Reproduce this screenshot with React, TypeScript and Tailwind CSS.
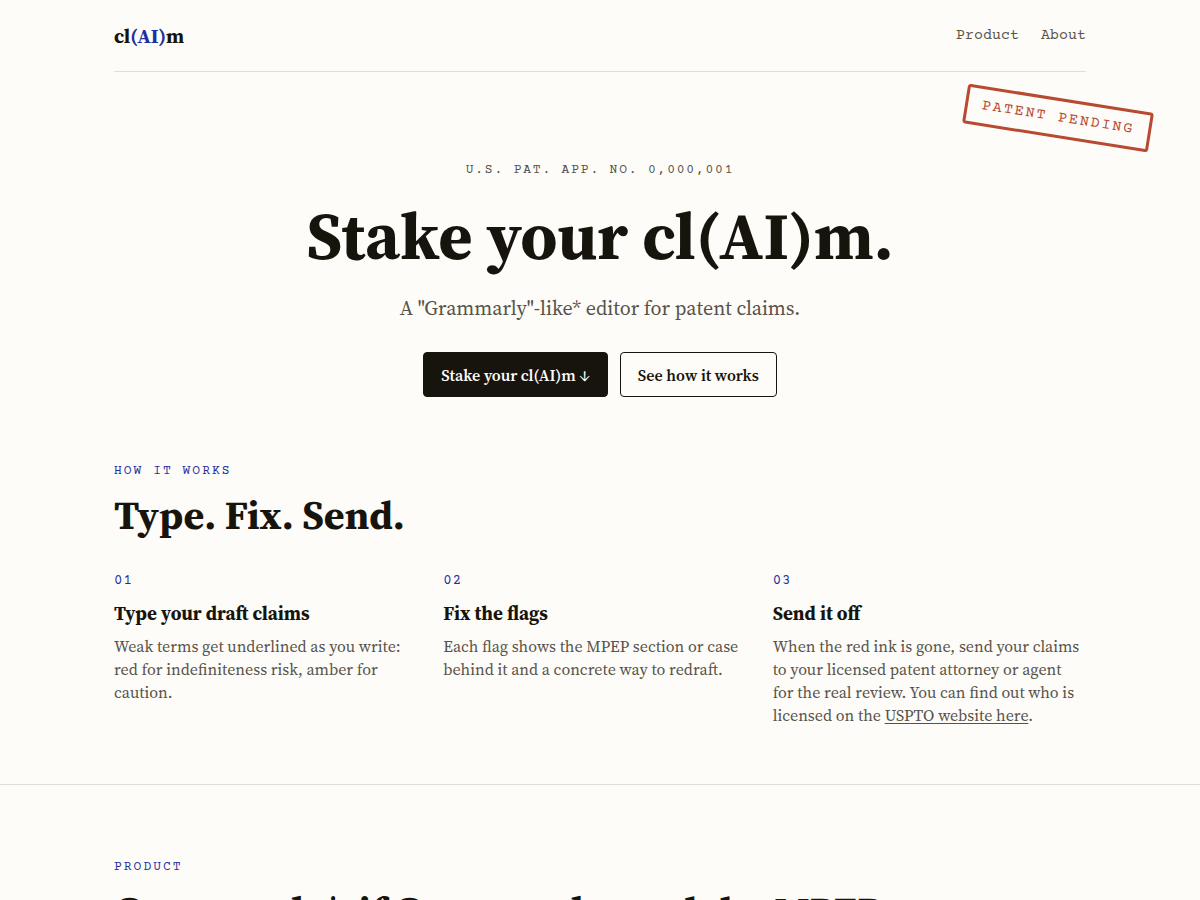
import type { ReactNode } from 'react';

const steps: { number: string; title: string; body: ReactNode }[] = [
  {
    number: '01',
    title: 'Type your draft claims',
    body: 'Weak terms get underlined as you write: red for indefiniteness risk, amber for caution.',
  },
  {
    number: '02',
    title: 'Fix the flags',
    body: 'Each flag shows the MPEP section or case behind it and a concrete way to redraft.',
  },
  {
    number: '03',
    title: 'Send it off',
    body: (
      <>
        When the red ink is gone, send your claims to your licensed patent attorney or agent for the
        real review. You can find out who is licensed on the{' '}
        <a href="https://www.uspto.gov" className="underline underline-offset-2">
          USPTO website here
        </a>
        .
      </>
    ),
  },
];

function Eyebrow({ children }: { children: ReactNode }) {
  return (
    <p className="font-['Courier_Prime','Liberation_Mono',monospace] text-[13px] leading-5 tracking-[2px] uppercase text-[#1e2f9e]">
      {children}
    </p>
  );
}

function SectionTitle({ children }: { children: ReactNode }) {
  return <h2 className="mt-2.5 text-[40px] leading-12 font-bold">{children}</h2>;
}

function Header() {
  return (
    <header className="flex h-18 items-center justify-between border-b border-[#dfded9]">
      <a href="#top" className="text-[20px] leading-6 font-bold">
        cl<span className="text-[#1e2f9e]">(AI)</span>m
      </a>
      <nav className="flex gap-[22px] font-['Courier_Prime','Liberation_Mono',monospace] text-[15px] leading-6 text-[#57534b]">
        <a href="#product">Product</a>
        <a href="#about">About</a>
      </nav>
    </header>
  );
}

function Hero() {
  return (
    <section className="flex flex-col items-center pt-[88px] text-center">
      <p className="font-['Courier_Prime','Liberation_Mono',monospace] text-[13px] leading-5 tracking-[1.8px] text-[#57534b]">
        U.S. PAT. APP. NO. 0,000,001
      </p>
      <h1 className="mt-4 text-[66px] leading-20 font-bold">Stake your cl(AI)m.</h1>
      <p className="mt-4 text-[20px] leading-8 text-[#57534b]">
        A "Grammarly"-like* editor for patent claims.
      </p>
      <div className="mt-7 flex flex-wrap justify-center gap-3">
        <button
          type="button"
          className="h-[45px] rounded border border-[#17140d] bg-[#17140d] px-[17px] text-base font-semibold text-[#fdfcf8]"
        >
          Stake your cl(AI)m ↓
        </button>
        <button
          type="button"
          className="h-[45px] rounded border border-[#17140d] px-[17px] text-base font-semibold"
        >
          See how it works
        </button>
      </div>
    </section>
  );
}

function HowItWorks() {
  return (
    <section id="how" className="pt-16 pb-[57px]">
      <Eyebrow>How it works</Eyebrow>
      <SectionTitle>Type. Fix. Send.</SectionTitle>
      <div className="mt-8 grid gap-4 md:grid-cols-3">
        {steps.map((step) => (
          <div key={step.number}>
            <p className="font-['Courier_Prime','Liberation_Mono',monospace] text-sm leading-5 tracking-[1px] text-[#1e2f9e]">
              {step.number}
            </p>
            <h3 className="mt-2 text-[19px] leading-7 font-bold">{step.title}</h3>
            <p className="mt-2 text-base leading-[23px] text-[#57534b]">{step.body}</p>
          </div>
        ))}
      </div>
    </section>
  );
}

export default function App() {
  return (
    <div
      id="top"
      className="relative min-h-screen overflow-hidden bg-[#fdfcf8] font-['Source_Serif_4','Liberation_Serif',serif] text-[#17140d]"
    >
      <div className="absolute top-[98px] right-12 rotate-9 rounded-[3px] border-3 border-[#b84a32] px-3.5 py-1.5 font-['Courier_Prime','Liberation_Mono',monospace] text-[15px] leading-[22px] tracking-[2px] text-[#b84a32]">
        PATENT PENDING
      </div>
      <div className="mx-auto max-w-[1020px] px-6">
        <Header />
        <Hero />
        <HowItWorks />
      </div>
      <div className="border-t border-[#dfded9]">
        <section id="product" className="mx-auto max-w-[1020px] px-6 pt-18 pb-16">
          <Eyebrow>Product</Eyebrow>
          <SectionTitle>Grammarly*, if Grammarly read the MPEP.</SectionTitle>
        </section>
      </div>
    </div>
  );
}
